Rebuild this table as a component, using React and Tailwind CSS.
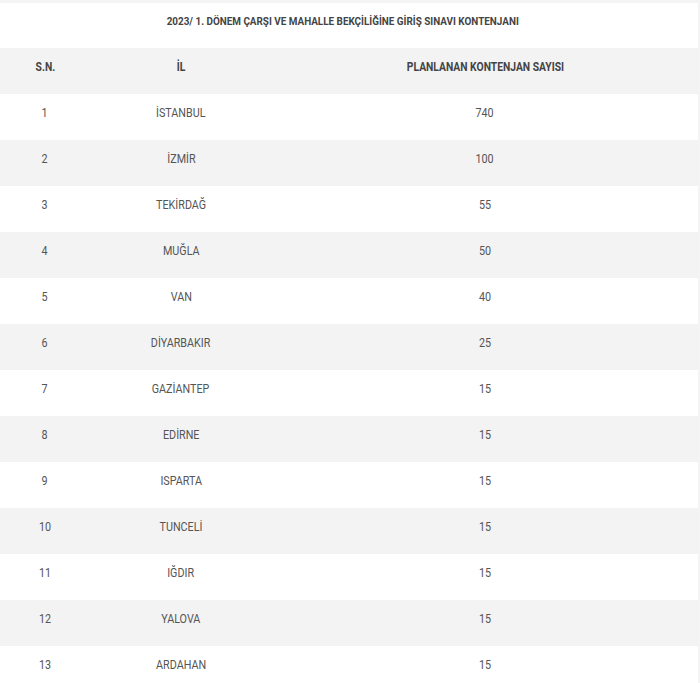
const rows = [
  [1, 'İSTANBUL', 740],
  [2, 'İZMİR', 100],
  [3, 'TEKİRDAĞ', 55],
  [4, 'MUĞLA', 50],
  [5, 'VAN', 40],
  [6, 'DİYARBAKIR', 25],
  [7, 'GAZİANTEP', 15],
  [8, 'EDİRNE', 15],
  [9, 'ISPARTA', 15],
  [10, 'TUNCELİ', 15],
  [11, 'IĞDIR', 15],
  [12, 'YALOVA', 15],
  [13, 'ARDAHAN', 15],
];

// Roboto squeezed to look like the condensed face in the screenshot
const Cond = ({ children }) => (
  <span className="inline-block scale-x-[0.86] whitespace-nowrap">{children}</span>
);

export default function App() {
  return (
    <div
      className="w-[700px] h-[683px] overflow-hidden bg-white"
      style={{ fontFamily: 'Roboto, "Liberation Sans", sans-serif' }}
    >
      <div className="border-t-[3px] border-r-2 border-[#f4f4f4]">
        <div className="h-[45px] pb-2 pr-3 flex items-center justify-center text-[11.5px] font-bold text-[#444]">
          <Cond>2023/ 1. DÖNEM ÇARŞI VE MAHALLE BEKÇİLİĞİNE GİRİŞ SINAVI KONTENJANI</Cond>
        </div>
        <div className="grid grid-cols-[90px_182px_1fr] h-[46px] pb-2 items-center bg-[#f3f3f3] text-[12px] font-bold text-[#444] text-center">
          <div><Cond>S.N.</Cond></div>
          <div><Cond>İL</Cond></div>
          <div><Cond>PLANLANAN KONTENJAN SAYISI</Cond></div>
        </div>
        {rows.map(([n, city, count], i) => (
          <div
            key={n}
            className={`grid grid-cols-[90px_182px_1fr] h-[46px] pb-2 items-center text-[12.5px] text-[#555] text-center ${
              i % 2 === 1 ? 'bg-[#f3f3f3]' : 'bg-white'
            }`}
          >
            <div><Cond>{n}</Cond></div>
            <div><Cond>{city}</Cond></div>
            <div><Cond>{count}</Cond></div>
          </div>
        ))}
      </div>
    </div>
  );
}
